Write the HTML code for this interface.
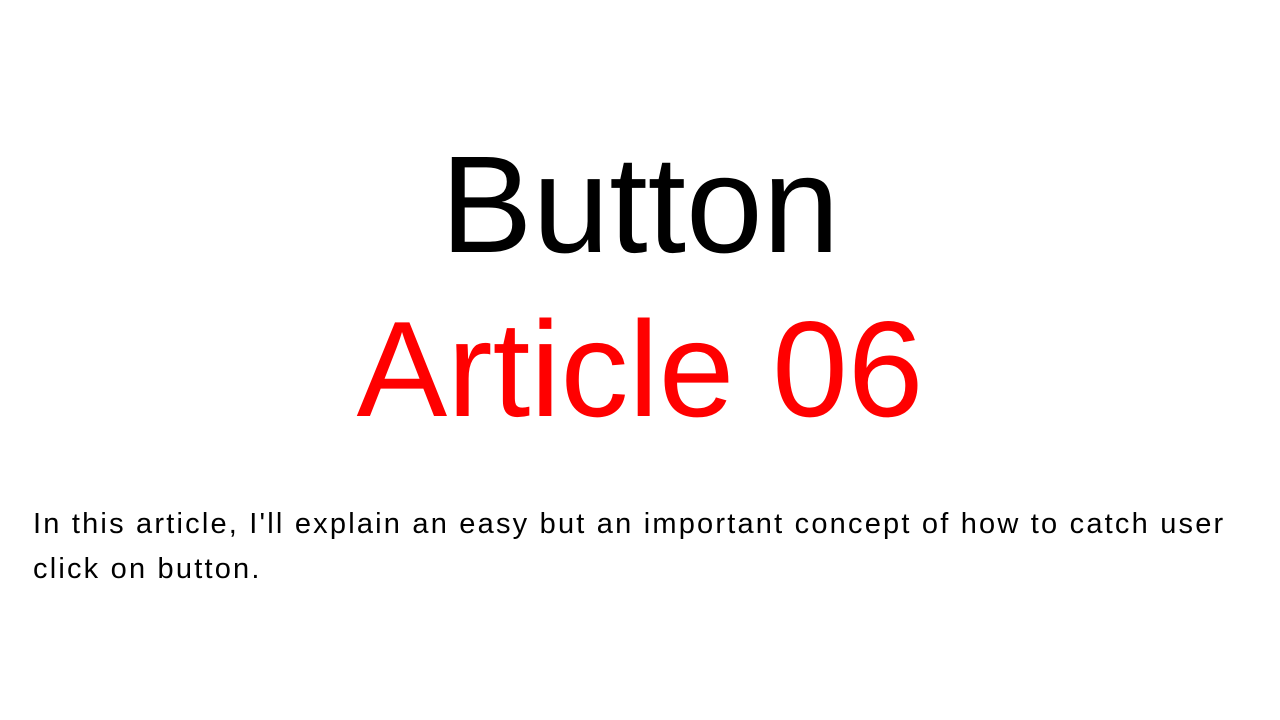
<!DOCTYPE html>
<html><head><meta charset="utf-8"><style>
html,body{margin:0;padding:0;background:#fff;width:1280px;height:720px;overflow:hidden;position:relative;font-family:"Liberation Sans",sans-serif}
.t{position:absolute;left:0;width:1280px;text-align:center;line-height:1;white-space:nowrap}
#b{top:136px;font-size:138px;color:#000}
#a{top:301px;font-size:136px;color:#ff0000}
#p{position:absolute;left:33px;top:502px;width:1240px;font-size:29px;letter-spacing:2.2px;line-height:45px;color:#000;white-space:nowrap}
</style></head><body>
<div class="t" id="b">Button</div>
<div class="t" id="a">Article 06</div>
<div id="p">In this article, I'll explain an easy but an important concept of how to catch user<br>click on button.</div>
</body></html>
